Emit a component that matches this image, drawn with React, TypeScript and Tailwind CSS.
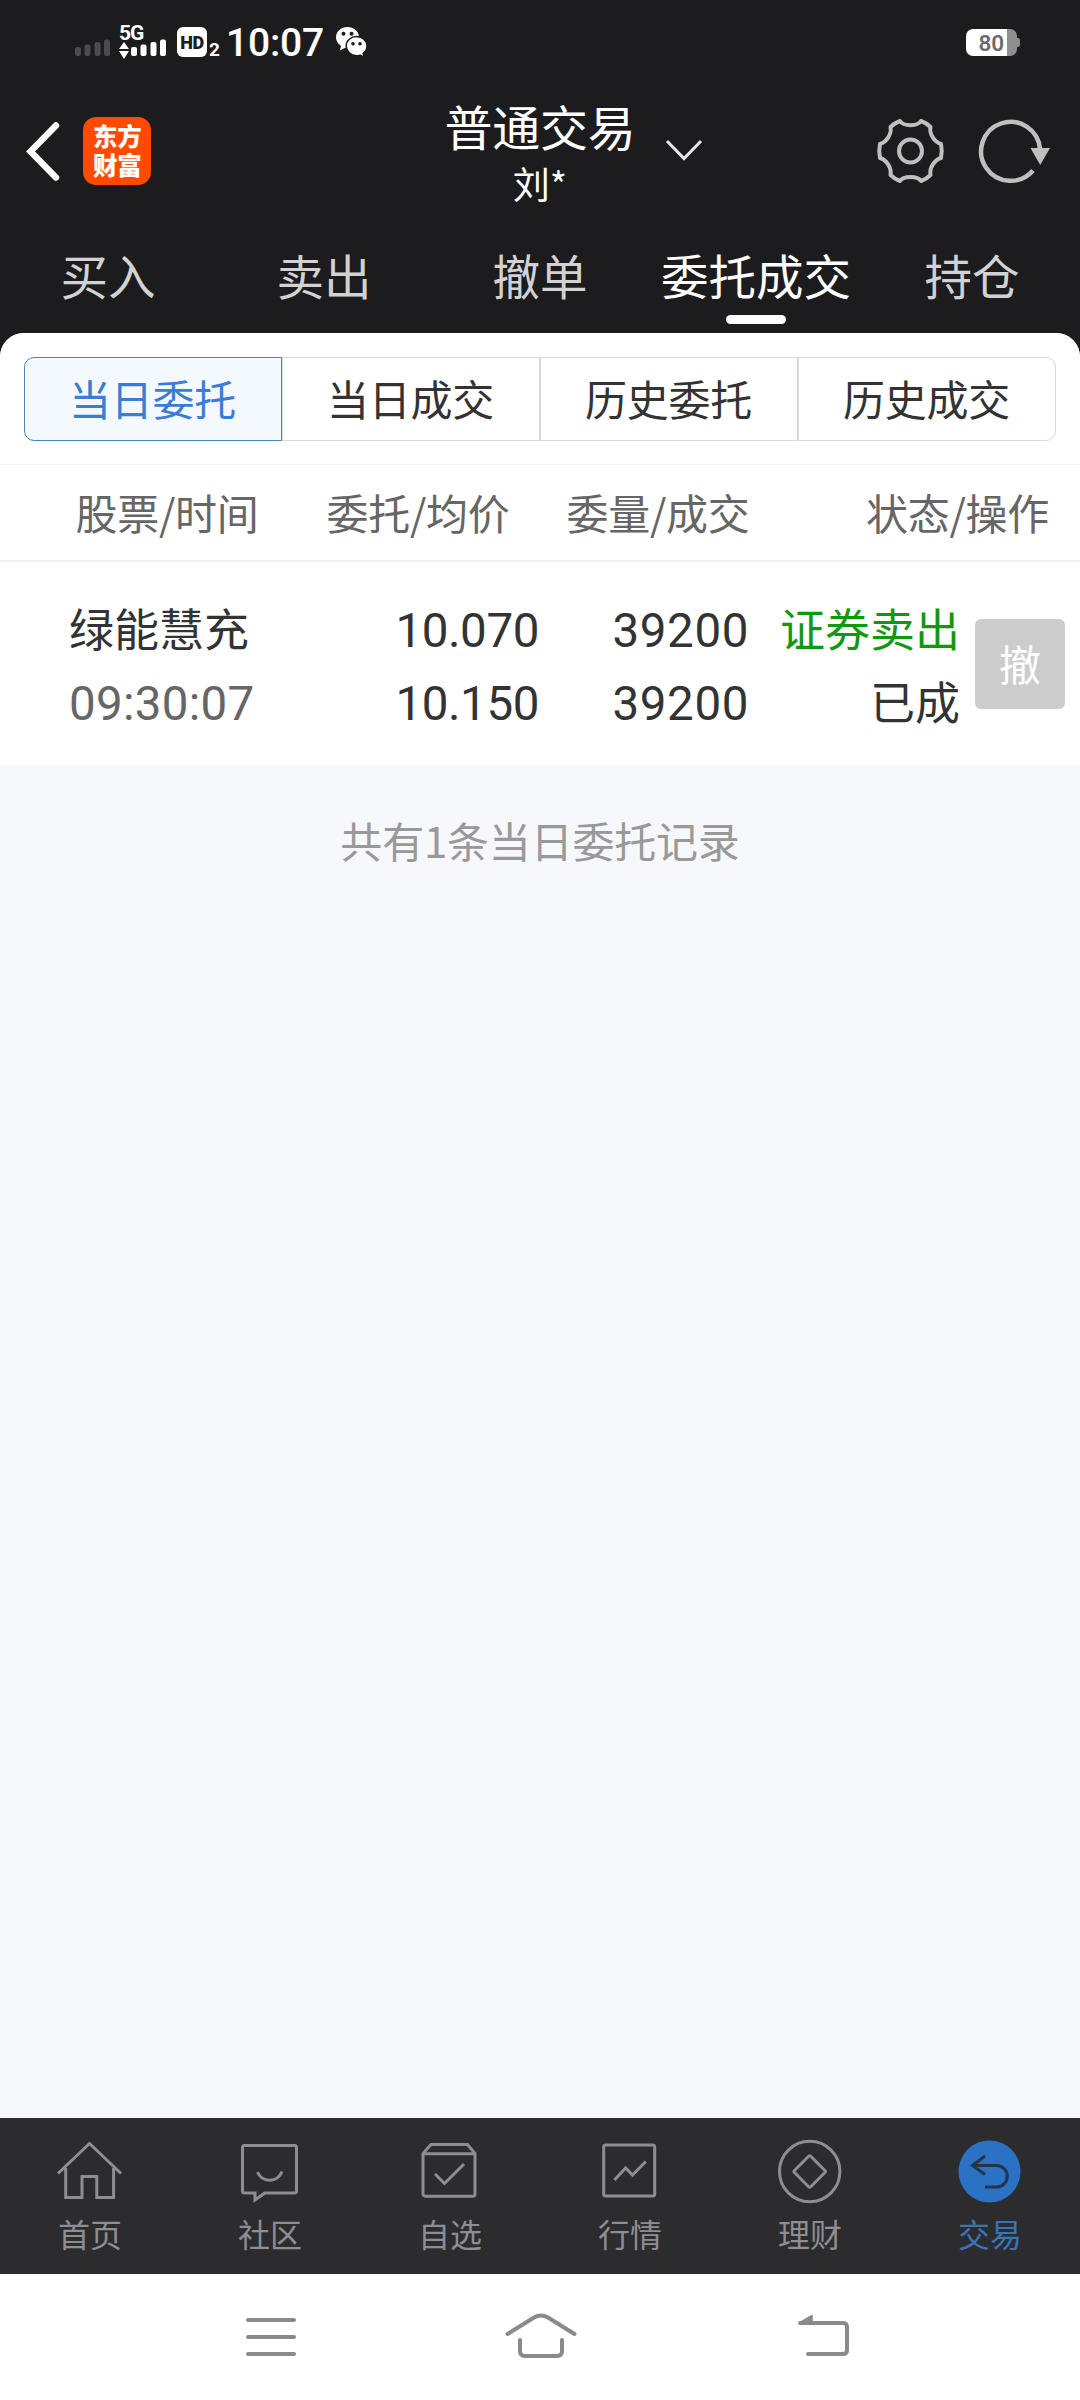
import React, { useState } from 'react';

const TOP_TABS = ['买入', '卖出', '撤单', '委托成交', '持仓'];
const SUB_TABS = ['当日委托', '当日成交', '历史委托', '历史成交'];

const ORDERS = [
  {
    name: '绿能慧充',
    time: '09:30:07',
    price: '10.070',
    avgPrice: '10.150',
    amount: '39200',
    filled: '39200',
    side: '证券卖出',
    status: '已成',
  },
];

const NAV_ITEMS = [
  {
    label: '首页',
    icon: (
      <>
        <path d="M0 33.5 31.5 3.5 63 33.5" />
        <path d="M7.7 28V57.5H24V36.5H38.8V57.5H55.6V28" />
      </>
    ),
  },
  {
    label: '社区',
    icon: (
      <>
        <path d="M6.5 5.5H56.5a2 2 0 0 1 2 2V51a2 2 0 0 1-2 2H26.8L17 60V53H6.5a2 2 0 0 1-2-2V7.5a2 2 0 0 1 2-2Z" />
        <path d="M19.5 32C24 43 39.5 43 44 31.5" />
      </>
    ),
  },
  {
    label: '自选',
    icon: (
      <>
        <path d="M5 13.5 13 4.5H49.5L57 13.5V54a2.2 2.2 0 0 1-2.2 2.2H7.2A2.2 2.2 0 0 1 5 54Z" />
        <path d="M5 13.7H57M17 34 26.5 43.5 46 24" />
      </>
    ),
  },
  {
    label: '行情',
    icon: (
      <>
        <rect x="5.7" y="5" width="51" height="51" rx="2" />
        <path d="M16.4 40 27.7 28 34.5 35 47.8 21.5" />
      </>
    ),
  },
  {
    label: '理财',
    icon: (
      <>
        <circle cx="31.7" cy="31.5" r="30.2" />
        <rect x="20.2" y="20" width="23" height="23" rx="1.5" transform="rotate(45 31.7 31.5)" />
      </>
    ),
  },
  {
    label: '交易',
    icon: (
      <>
        <circle cx="31.5" cy="31.5" r="31" fill="#2b72c4" stroke="none" />
        <path d="M27 16 14.5 25.5 27 34.5M14.5 25.5H38.5a10.8 10.8 0 0 1 0 21.6H27" stroke="#22364f" />
      </>
    ),
  },
];

const SignalBars = ({ className }: { className: string }) => (
  <svg className={className} width="36" height="18" viewBox="0 0 36 18" fill="currentColor">
    <rect x="0" y="9" width="6" height="9" rx="2" />
    <rect x="9.5" y="6.5" width="6" height="11.5" rx="2" />
    <rect x="19.5" y="4" width="6" height="14" rx="2" />
    <rect x="29" y="1.5" width="6" height="16.5" rx="2" />
  </svg>
);

const StatusBar = () => (
  <div className="h-[90px] pl-[75px] pr-[60px] flex items-start justify-between font-[Roboto,sans-serif] text-white">
    <div className="flex items-start">
      <SignalBars className="mt-[38px] text-[#4b4b4d]" />
      <div className="ml-[8px] mt-[24px] w-[48px]">
        <div className="h-[14px] text-[21px] leading-[18px] font-bold tracking-[-1px]">5G</div>
        <div className="flex">
          <svg className="mt-[4px]" width="10" height="17" viewBox="0 0 10 17" fill="currentColor">
            <path d="M5 0 10 7H0ZM5 17 0 9H10Z" />
          </svg>
          <SignalBars className="ml-[2px]" />
        </div>
      </div>
      <div className="ml-[10px] mt-[27px] w-[30px] h-[30px] rounded-[6px] bg-white text-[#1c1c1e] text-[18px] leading-[31px] font-black text-center tracking-[-0.5px]">
        HD
      </div>
      <span className="ml-[2px] mt-[41px] text-[19px] leading-[18px] font-bold w-[12px]">2</span>
      <span className="ml-[5px] mt-[23px] text-[39px] leading-[40px] font-medium w-[110px] tracking-[-0.2px]">10:07</span>
      {/* WeChat */}
      <svg className="mt-[27px]" width="31" height="31" viewBox="0 0 31 31">
        <path fill="#fff" d="M11.5 0C5 0 0 4.5 0 10.5c0 3.5 2 6.5 5 8.5l-1.2 4.5L9 21c6 1 14-3 14-10.5C23 4.5 18 0 11.5 0Z" />
        <circle cx="7.5" cy="6.8" r="2" fill="#1c1c1e" />
        <circle cx="15.5" cy="6.8" r="2" fill="#1c1c1e" />
        <path fill="#fff" stroke="#1c1c1e" strokeWidth="1.5" d="M20.5 9.5c-5.5 0-10.3 4-10.3 9.5S15 28.7 20.5 28.7c1.2 0 2.5-.2 3.5-.6L28.3 30.5l-1.2-4.2C29.5 24.5 31 22 31 19c0-5.5-5-9.5-10.5-9.5Z" />
        <circle cx="17" cy="16.8" r="1.8" fill="#1c1c1e" />
        <circle cx="24" cy="16.8" r="1.8" fill="#1c1c1e" />
      </svg>
    </div>

    <div className="mt-[29px] flex items-center">
      <div className="w-[51px] h-[27px] rounded-[7px] bg-linear-to-r from-white from-80% to-[#8f8f8f] to-80% text-[#6b6b6b] text-[22.5px] leading-[29px] font-semibold pl-[12.5px] overflow-hidden">
        80
      </div>
      <div className="w-[3px] h-[9px] rounded-r-[2px] bg-[#8f8f8f]" />
    </div>
  </div>
);

const Header = () => (
  <div className="h-[140px] flex items-start justify-between">
    <div className="w-[300px] pl-[26px] pt-[27px] flex items-center">
      <svg width="34" height="60" viewBox="0 0 34 60" fill="none" stroke="#fff" strokeWidth="6.5" strokeLinecap="round">
        <path d="M30 4.5 4.5 30.5 30 56.5" />
      </svg>
      <div className="ml-[23px] w-[68px] h-[68px] rounded-[13px] bg-[#ff4a00] pl-[10px] pt-[4px]">
        <p className="w-[50px] text-white font-black text-[24.5px] leading-[29px] tracking-[-0.2px]">东方财富</p>
      </div>
    </div>

    <div className="relative text-white text-center">
      <div className="text-[48px] leading-[70px] tracking-[-0.3px]">普通交易</div>
      <div className="text-[37px] leading-[47px]">刘*</div>
      <svg className="absolute left-[219px] top-[48px]" width="40" height="24" viewBox="0 0 40 24" fill="none" stroke="#e6e6e6" strokeWidth="3">
        <path d="M3 3 20 20.5 37 3" />
      </svg>
    </div>

    <div className="w-[300px] pt-[27px] pr-[29px] flex justify-end">
      <svg width="70" height="68" viewBox="-35.5 -34 70 68" fill="none" stroke="#bfbfbf" strokeWidth="4" strokeLinejoin="round">
        <path d="M-10.5-30C-7-24.5 7-24.5 10.5-30Q16-28 20-24C18.5-17 24-9 30.5-7Q32 0 30.5 7C24 9 18.5 17 20 24Q16 28 10.5 30C7 24.5-7 24.5-10.5 30Q-16 28-20 24C-18.5 17-24 9-30.5 7Q-32 0-30.5-7C-24-9-18.5-17-20-24Q-16-28-10.5-30Z" />
        <circle r="11.5" />
      </svg>
      <svg className="ml-[32px]" width="74" height="68" viewBox="-33.5 -34 74 68" fill="none" stroke="#bfbfbf" strokeWidth="4.5">
        <path d="M22.5 19.5A29.5 29.5 0 1 1 29.5-2" />
        <path d="M20-3H39.5L29.7 14Z" fill="#bfbfbf" stroke="none" />
      </svg>
    </div>
  </div>
);

const SystemNav = () => (
  <div className="h-[126px] bg-white">
    <svg width="1080" height="126" viewBox="0 0 1080 126" fill="none" stroke="#8a8a8a" strokeWidth="4" strokeLinecap="round" strokeLinejoin="round">
      <path d="M248 46H294M248 63H294M248 80H294" />
      <path d="M507.5 60 534 43.5Q541 39.5 548 43.5L574.5 60" />
      <path d="M520 66V77Q520 82 525 82H557Q562 82 562 77V66" />
      <path d="M800 49H843Q847 49 847 53V76Q847 80 843 80H808" />
      <path d="M800 48.5 812 41.5V49Z" fill="#8a8a8a" strokeWidth="1.5" />
    </svg>
  </div>
);

const App: React.FC = () => {
  const [topTab, setTopTab] = useState(3);
  const [subTab, setSubTab] = useState(0);
  const [nav, setNav] = useState(5);

  return (
    <div className="w-[1080px] h-[2400px] flex flex-col overflow-hidden bg-[#1c1c1e] font-['Noto_Sans_CJK_SC',sans-serif]">
      <StatusBar />
      <Header />

      {/* Trade tabs */}
      <div className="h-[103px] pt-[2px] grid grid-cols-5">
        {TOP_TABS.map((tab, i) => (
          <button key={tab} onClick={() => setTopTab(i)} className={`flex flex-col items-center text-[47.5px] leading-[85px] whitespace-nowrap ${i === topTab ? 'text-white' : 'text-[#d2d2d2]'}`}>
            {tab}
            {i === topTab && <span className="w-[60px] h-[9px] -mt-[2px] rounded-full bg-white" />}
          </button>
        ))}
      </div>

      <div className="flex-1 flex flex-col rounded-t-[24px] bg-[#f6f8fb] overflow-hidden">
        {/* Segmented control */}
        <div className="h-[132px] px-6 pt-6 bg-white border-b border-[#f4f4f4]">
          <div className="grid grid-cols-4 h-[84px]">
            {SUB_TABS.map((tab, i) => (
              <button
                key={tab}
                onClick={() => setSubTab(i)}
                className={`border pb-[3px] pr-[1px] text-[42px] leading-[79px] tracking-[-0.2px] first:rounded-l-[10px] last:rounded-r-[10px] ${i === subTab ? 'border-[#4c84b8] bg-[#f4f9ff] text-[#3b7dd4]' : 'border-[#d6d8da] text-[#333]'}`}
              >
                {tab}
              </button>
            ))}
          </div>
        </div>

        {/* Column titles */}
        <div className="h-[97px] pl-[75.5px] pr-[31px] grid grid-cols-[251px_240px_1fr_auto] bg-white border-b-2 border-[#f0f0f0] text-[42px] leading-[94px] tracking-[-0.3px] text-[#666]">
          <span>股票/时间</span>
          <span>委托/均价</span>
          <span>委量/成交</span>
          <span>状态/操作</span>
        </div>

        {ORDERS.map((o) => (
          <div key={o.time} className="h-[203px] pl-[69px] pr-[15px] pt-[29px] flex bg-white text-[45px] leading-[73px] text-[#333]">
            <div className="w-[230px]">
              <div>{o.name}</div>
              <div className="pt-[4px] font-[Roboto] text-[47.5px] tracking-[0.3px] text-[#666]">{o.time}</div>
            </div>
            <div className="w-[240px] pt-[4px] text-right font-[Roboto] text-[47.5px] tracking-[-0.4px]">
              <div>{o.price}</div>
              <div>{o.avgPrice}</div>
            </div>
            <div className="w-[210px] pt-[4px] text-right font-[Roboto] text-[47.5px] tracking-[0.6px]">
              <div>{o.amount}</div>
              <div>{o.filled}</div>
            </div>
            <div className="w-[211px] text-right">
              <div className="text-[#0f990f]">{o.side}</div>
              <div>{o.status}</div>
            </div>
            <button className="ml-auto mt-[28px] w-[90px] h-[90px] pb-[3px] rounded-[6px] bg-[#ccc] text-white text-[42px] leading-[86px]">撤</button>
          </div>
        ))}

        <p className="pt-[40px] text-center text-[42px] leading-[70px] tracking-[-0.2px] text-[#999]">共有{ORDERS.length}条当日委托记录</p>
      </div>

      {/* Bottom navigation */}
      <div className="h-[156px] pt-[22px] grid grid-cols-6 bg-[#2c2c2e]">
        {NAV_ITEMS.map((item, i) => (
          <button key={item.label} onClick={() => setNav(i)} className={`flex flex-col items-center ${i === nav ? 'text-[#3a74b8]' : 'text-[#8e8d92]'}`}>
            <svg className="overflow-visible" width="64" height="64" viewBox="0 0 64 64" fill="none" stroke={i === nav ? 'currentColor' : '#8e8d92'} strokeWidth="3">
              {item.icon}
            </svg>
            <span className="mt-[7px] text-[32px] leading-[45px]">{item.label}</span>
          </button>
        ))}
      </div>

      <SystemNav />
    </div>
  );
};

export default App;
